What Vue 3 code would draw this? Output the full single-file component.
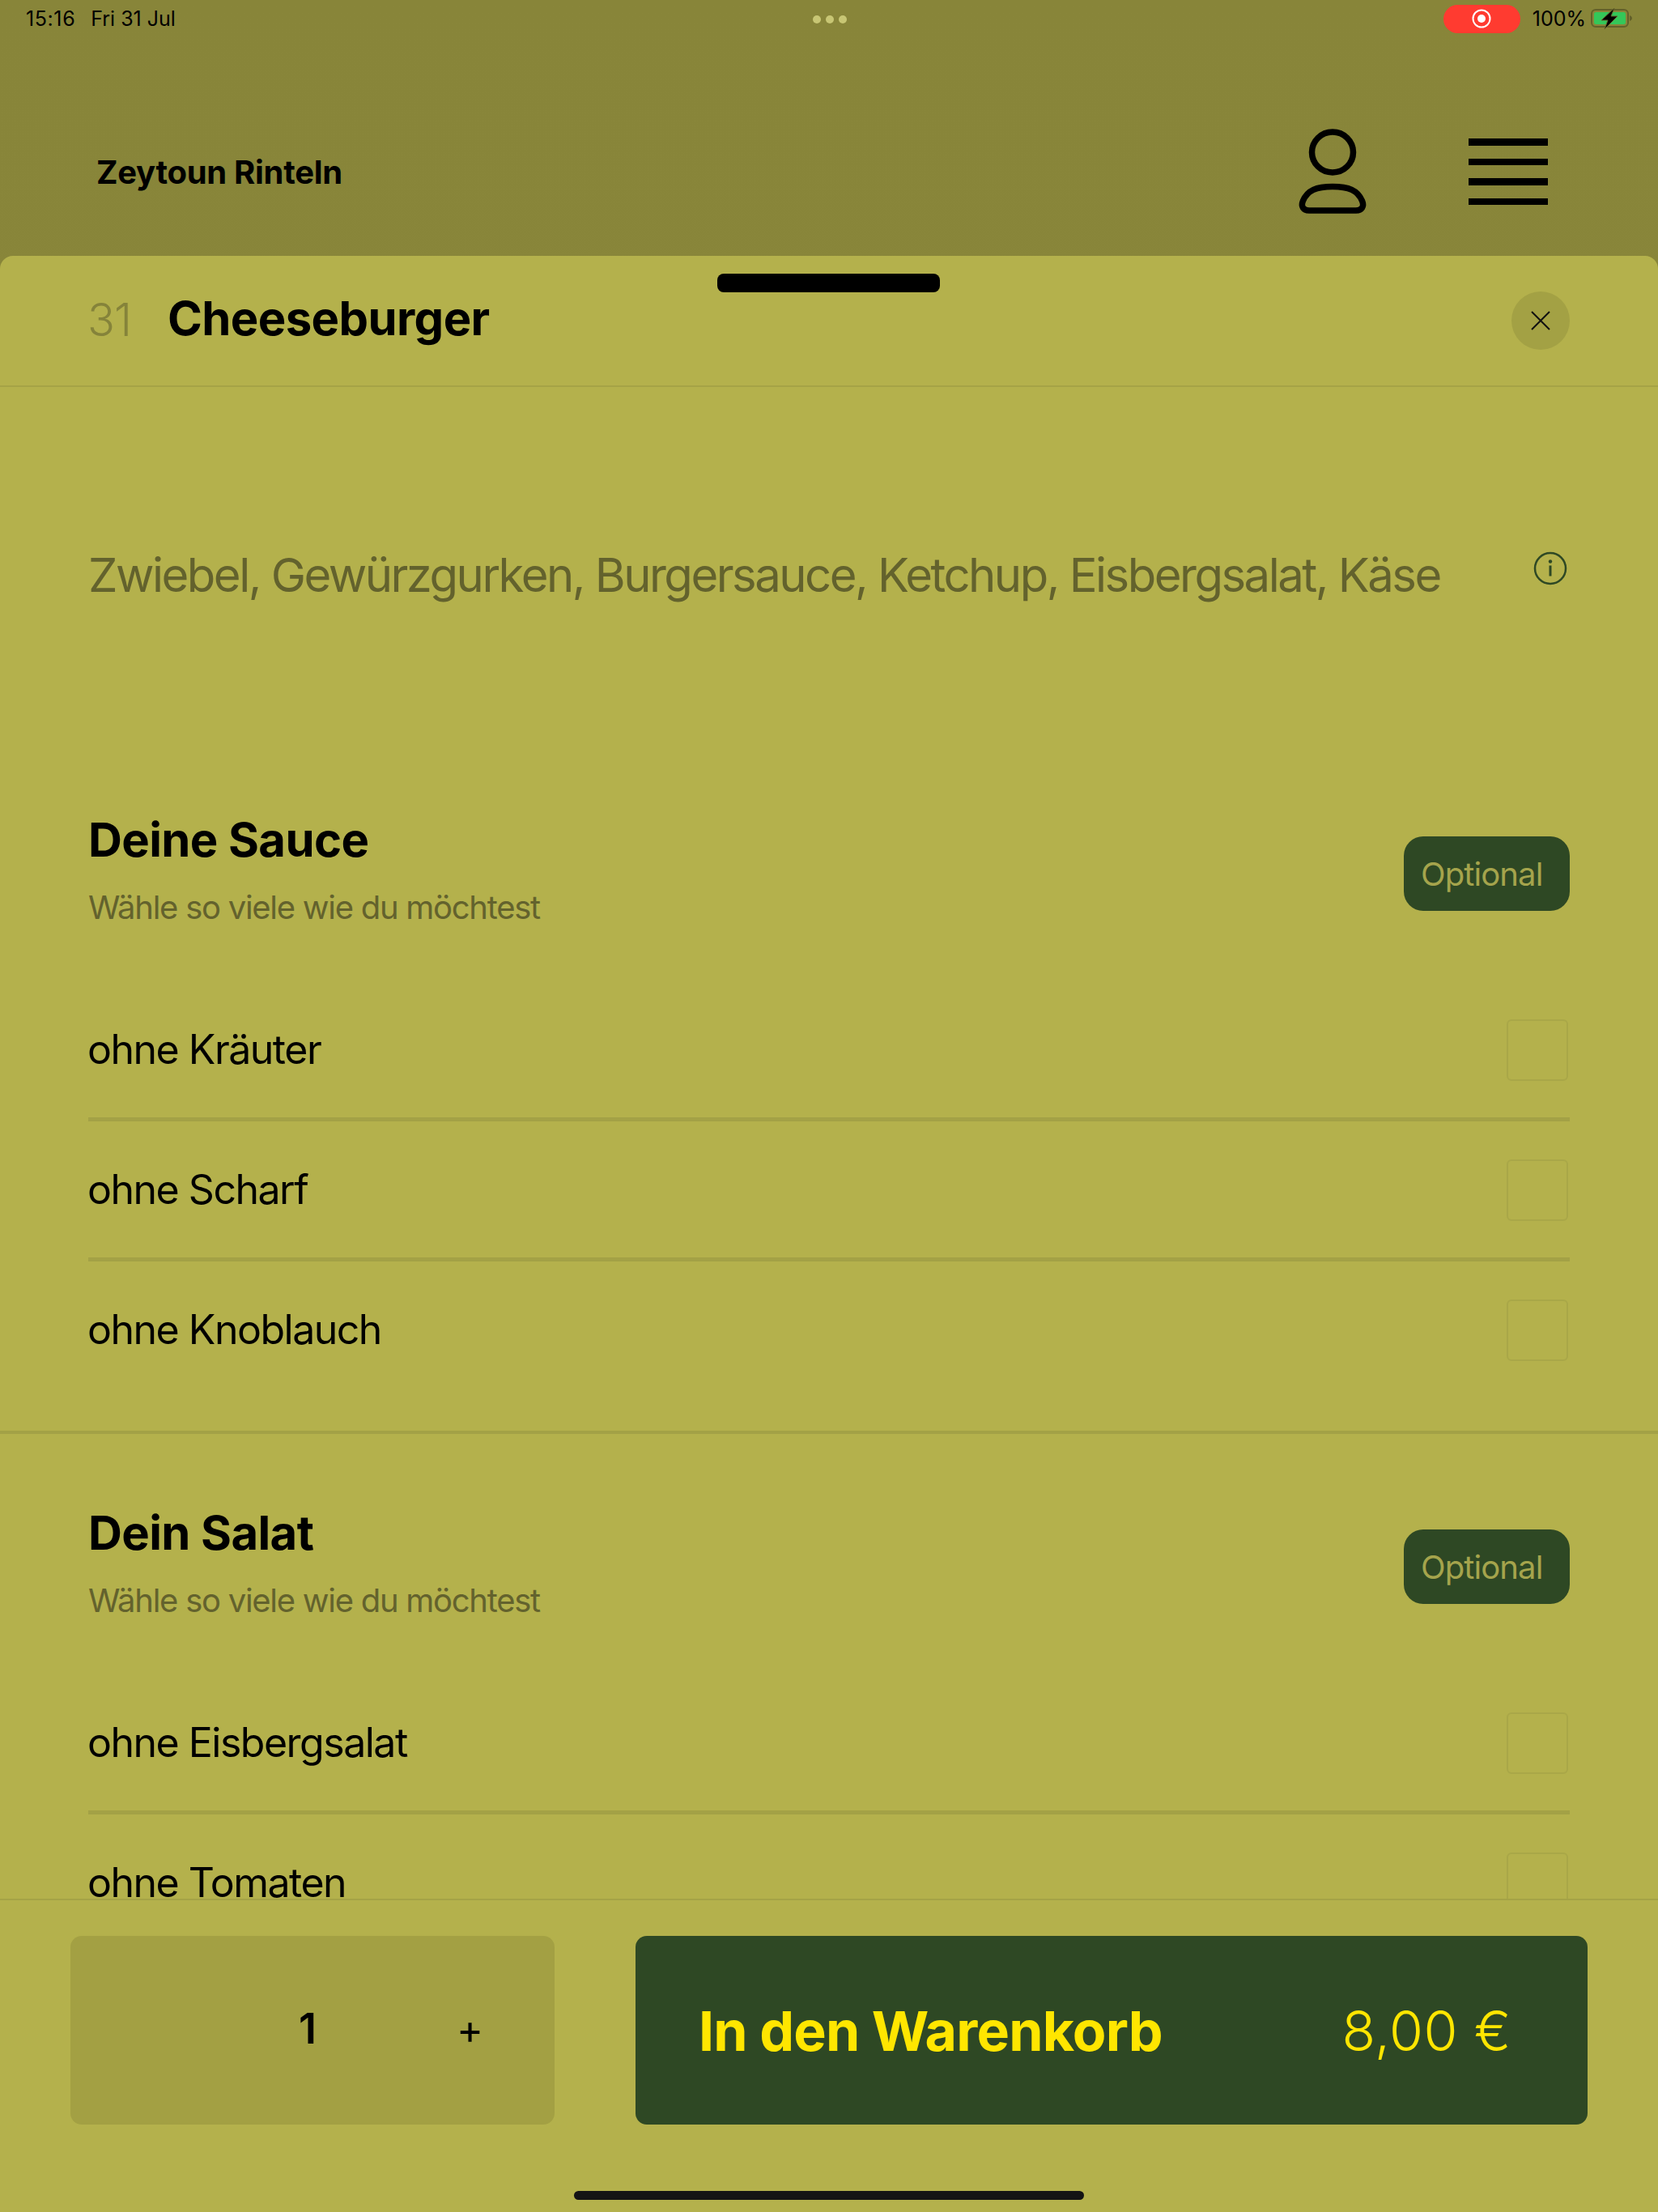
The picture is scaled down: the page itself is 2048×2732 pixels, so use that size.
<script setup>
const sections = [
  {
    title: 'Deine Sauce',
    hint: 'Wähle so viele wie du möchtest',
    options: ['ohne Kräuter', 'ohne Scharf', 'ohne Knoblauch'],
  },
  {
    title: 'Dein Salat',
    hint: 'Wähle so viele wie du möchtest',
    options: ['ohne Eisbergsalat', 'ohne Tomaten'],
  },
]
</script>

<template>
  <div class="page">
    <div class="status-bar">
      <div class="status-left">
        <span class="status-time">15:16</span>
        <span>Fri 31 Jul</span>
      </div>
      <div class="status-dots"><i></i><i></i><i></i></div>
      <div class="status-right">
        <div class="rec-pill">
          <svg width="24" height="24" viewBox="0 0 24 24">
            <circle cx="12" cy="12" r="10.5" fill="none" stroke="#fff" stroke-width="2" />
            <circle cx="12" cy="12" r="5" fill="#fff" />
          </svg>
        </div>
        <span class="battery-text">100%</span>
        <svg class="battery" width="52" height="26" viewBox="0 0 52 26">
          <rect x="1" y="2" width="45" height="21" rx="5" fill="none" stroke="#63602a" stroke-width="2" />
          <rect x="4" y="5" width="39" height="15" rx="2.5" fill="#34c759" />
          <path d="M48 9 C50 10 51 11 51 12.5 C51 14 50 15 48 16 Z" fill="#63602a" />
          <path d="M29 0 L13 15 H21 L17 26 L33 10 H25 Z" fill="#000" stroke="#63602a" stroke-width="1" />
        </svg>
      </div>
    </div>

    <header class="top-bar">
      <div class="brand">Zeytoun Rinteln</div>
      <div class="top-actions">
        <svg class="user-icon" width="84" height="108" viewBox="0 0 84 108">
          <ellipse cx="42" cy="32" rx="25.5" ry="25" fill="none" stroke="#000" stroke-width="7.5" />
          <path
            d="M42 74.5 C22 74.5 11 79 5.5 92 C2.5 99 6 104 13 104 H71 C78 104 81.5 99 78.5 92 C73 79 62 74.5 42 74.5 Z"
            fill="none"
            stroke="#000"
            stroke-width="7.5"
          />
        </svg>
        <div class="menu-icon"><i></i><i></i><i></i><i></i></div>
      </div>
    </header>

    <main class="sheet">
      <div class="grabber"></div>
      <div class="sheet-header">
        <span class="item-number">31</span>
        <h1 class="item-name">Cheeseburger</h1>
        <button class="close-btn">
          <svg width="24" height="24" viewBox="0 0 24 24">
            <path d="M1 1 L23 23 M23 1 L1 23" stroke="#111" stroke-width="2" fill="none" />
          </svg>
        </button>
      </div>

      <div class="sheet-body">
        <div class="description">
          <p>Zwiebel, Gewürzgurken, Burgersauce, Ketchup, Eisbergsalat, Käse</p>
          <svg class="info-icon" width="42" height="42" viewBox="0 0 42 42">
            <circle cx="21" cy="21" r="19" fill="none" stroke="#2e4824" stroke-width="2.5" />
            <circle cx="21" cy="12.5" r="2.2" fill="#2e4824" />
            <rect x="19.5" y="17.5" width="3" height="13" fill="#2e4824" />
          </svg>
        </div>

        <section v-for="section in sections" :key="section.title" class="group">
          <div class="group-head">
            <div class="group-text">
              <h2 class="group-title">{{ section.title }}</h2>
              <p class="group-hint">{{ section.hint }}</p>
            </div>
            <span class="badge">Optional</span>
          </div>
          <div v-for="option in section.options" :key="option" class="option">
            <span class="option-label">{{ option }}</span>
            <span class="checkbox"></span>
          </div>
        </section>
      </div>

      <footer class="sheet-footer">
        <div class="qty">
          <span class="qty-value">1</span>
          <span class="qty-plus">+</span>
        </div>
        <button class="add-btn">
          <span class="add-label">In den Warenkorb</span>
          <span class="add-price">8,00 €</span>
        </button>
      </footer>
      <div class="home-indicator"></div>
    </main>
  </div>
</template>

<style>
html,
body {
  margin: 0;
  padding: 0;
  background: #b4b14c;
}
</style>

<style scoped>
.page {
  width: 2048px;
  height: 2732px;
  display: flex;
  flex-direction: column;
  overflow: hidden;
  font-family: Inter, 'Liberation Sans', sans-serif;
  color: #000;
  background: linear-gradient(180deg, #888539 0%, #8a873b 50%, #868238 100%);
}

.status-bar {
  height: 46px;
  padding: 0 31px 0 32px;
  display: grid;
  grid-template-columns: 1fr auto 1fr;
  align-items: center;
  font-size: 25px;
  box-sizing: border-box;
}

.status-left {
  display: flex;
  gap: 19px;
}

.status-time {
  letter-spacing: 0.6px;
}

.status-dots {
  display: flex;
  gap: 6px;
  margin-top: 2px;
}

.status-dots i {
  width: 10px;
  height: 10px;
  border-radius: 50%;
  background: #c8c674;
}

.status-right {
  display: flex;
  justify-content: flex-end;
  align-items: center;
}

.rec-pill {
  width: 95px;
  height: 35px;
  border-radius: 18px;
  background: #ff3b30;
  display: flex;
  align-items: center;
  justify-content: center;
  margin-right: 15px;
}

.battery-text {
  margin-right: 6px;
}

.top-bar {
  height: 270px;
  box-sizing: border-box;
  padding: 62px 136px 0 119px;
  display: flex;
  align-items: center;
  justify-content: space-between;
}

.brand {
  font-size: 40px;
  font-weight: 700;
  letter-spacing: -0.3px;
  margin-top: 1px;
}

.top-actions {
  display: flex;
  align-items: center;
  gap: 126px;
}

.user-icon {
  margin-top: -4px;
}

.menu-icon {
  width: 98px;
  display: flex;
  flex-direction: column;
  gap: 16px;
}

.menu-icon i {
  height: 8.5px;
  background: #000;
}

.sheet {
  flex: 1;
  min-height: 0;
  position: relative;
  display: flex;
  flex-direction: column;
  background: #b4b14c;
  border-radius: 16px 16px 0 0;
}

.grabber {
  position: absolute;
  top: 22px;
  left: 886px;
  width: 275px;
  height: 23px;
  border-radius: 8px;
  background: #000;
}

.sheet-header {
  height: 160px;
  flex: none;
  display: flex;
  align-items: center;
  padding: 0 109px 0 108px;
  border-bottom: 2px solid #a5a346;
}

.item-number {
  width: 99px;
  font-size: 56px;
  font-weight: 300;
  letter-spacing: -1px;
  color: #85833a;
  margin-top: -3px;
}

.item-name {
  margin: -6px 0 0;
  flex: 1;
  font-size: 58px;
  font-weight: 700;
  letter-spacing: -0.6px;
}

.close-btn {
  width: 72px;
  height: 72px;
  border: 0;
  border-radius: 50%;
  background: #a3a144;
  padding: 0;
  display: flex;
  align-items: center;
  justify-content: center;
}

.sheet-body {
  flex: 1;
  min-height: 0;
  overflow: hidden;
}

.description {
  height: 437px;
  display: flex;
  align-items: center;
  justify-content: space-between;
  padding: 26px 112px 0 109px;
  box-sizing: border-box;
}

.description p {
  margin: 0;
  font-size: 58px;
  font-weight: 400;
  color: #63622d;
  letter-spacing: -2.5px;
  white-space: nowrap;
}

.info-icon {
  margin-top: -16px;
}

.group {
  padding: 31px 109px 41px;
  border-bottom: 4px solid #a3a146;
}

.group-head {
  height: 266px;
  display: flex;
  align-items: center;
  justify-content: space-between;
}

.group-text {
  margin-top: -12px;
}

.group-title {
  margin: 0 0 24px;
  font-size: 58px;
  font-weight: 700;
  letter-spacing: -0.6px;
}

.group-hint {
  margin: 0;
  font-size: 40px;
  letter-spacing: -1.27px;
  color: #63622d;
}

.badge {
  width: 205px;
  height: 92px;
  box-sizing: border-box;
  padding-left: 21px;
  border-radius: 24px;
  background: #2e4824;
  color: #a5a44c;
  font-size: 40px;
  letter-spacing: -0.9px;
  display: flex;
  align-items: center;
}

.option {
  height: 168px;
  display: flex;
  align-items: center;
  justify-content: space-between;
  font-size: 50px;
  letter-spacing: -1.5px;
  border-bottom: 5px solid #a3a146;
}

.option:last-child {
  border-bottom: 0;
}

.option-label {
  margin-left: -1px;
}

.checkbox {
  width: 76px;
  height: 76px;
  margin: 1px 2px 0 0;
  box-sizing: border-box;
  border: 2px solid #a9a748;
  border-radius: 6px;
}

.sheet-footer {
  flex: none;
  height: 387px;
  box-sizing: border-box;
  border-top: 2px solid #a5a346;
  padding: 44px 87px 0;
  display: flex;
  align-items: flex-start;
  gap: 100px;
  background: #b4b14c;
}

.qty {
  width: 598px;
  height: 233px;
  border-radius: 14px;
  background: #a3a043;
  display: flex;
  align-items: center;
  position: relative;
}

.qty-value {
  position: absolute;
  left: 282px;
  top: 83px;
  font-size: 52px;
  font-weight: 600;
  line-height: 63px;
}

.qty-plus {
  position: absolute;
  left: 477px;
  top: 91px;
  font-size: 50px;
  line-height: 48px;
}

.add-btn {
  width: 1176px;
  height: 233px;
  border: 0;
  border-radius: 14px;
  background: #2e4824;
  color: #ffe600;
  font-family: inherit;
  display: flex;
  align-items: center;
  justify-content: space-between;
  padding: 0 94px 0 78px;
  box-sizing: border-box;
}

.add-label {
  font-size: 68px;
  font-weight: 700;
  letter-spacing: -0.8px;
}

.add-price {
  font-size: 68px;
  font-weight: 300;
  letter-spacing: 0.5px;
}

.home-indicator {
  position: absolute;
  left: 709px;
  bottom: 15px;
  width: 630px;
  height: 11px;
  border-radius: 6px;
  background: #141414;
}
</style>
